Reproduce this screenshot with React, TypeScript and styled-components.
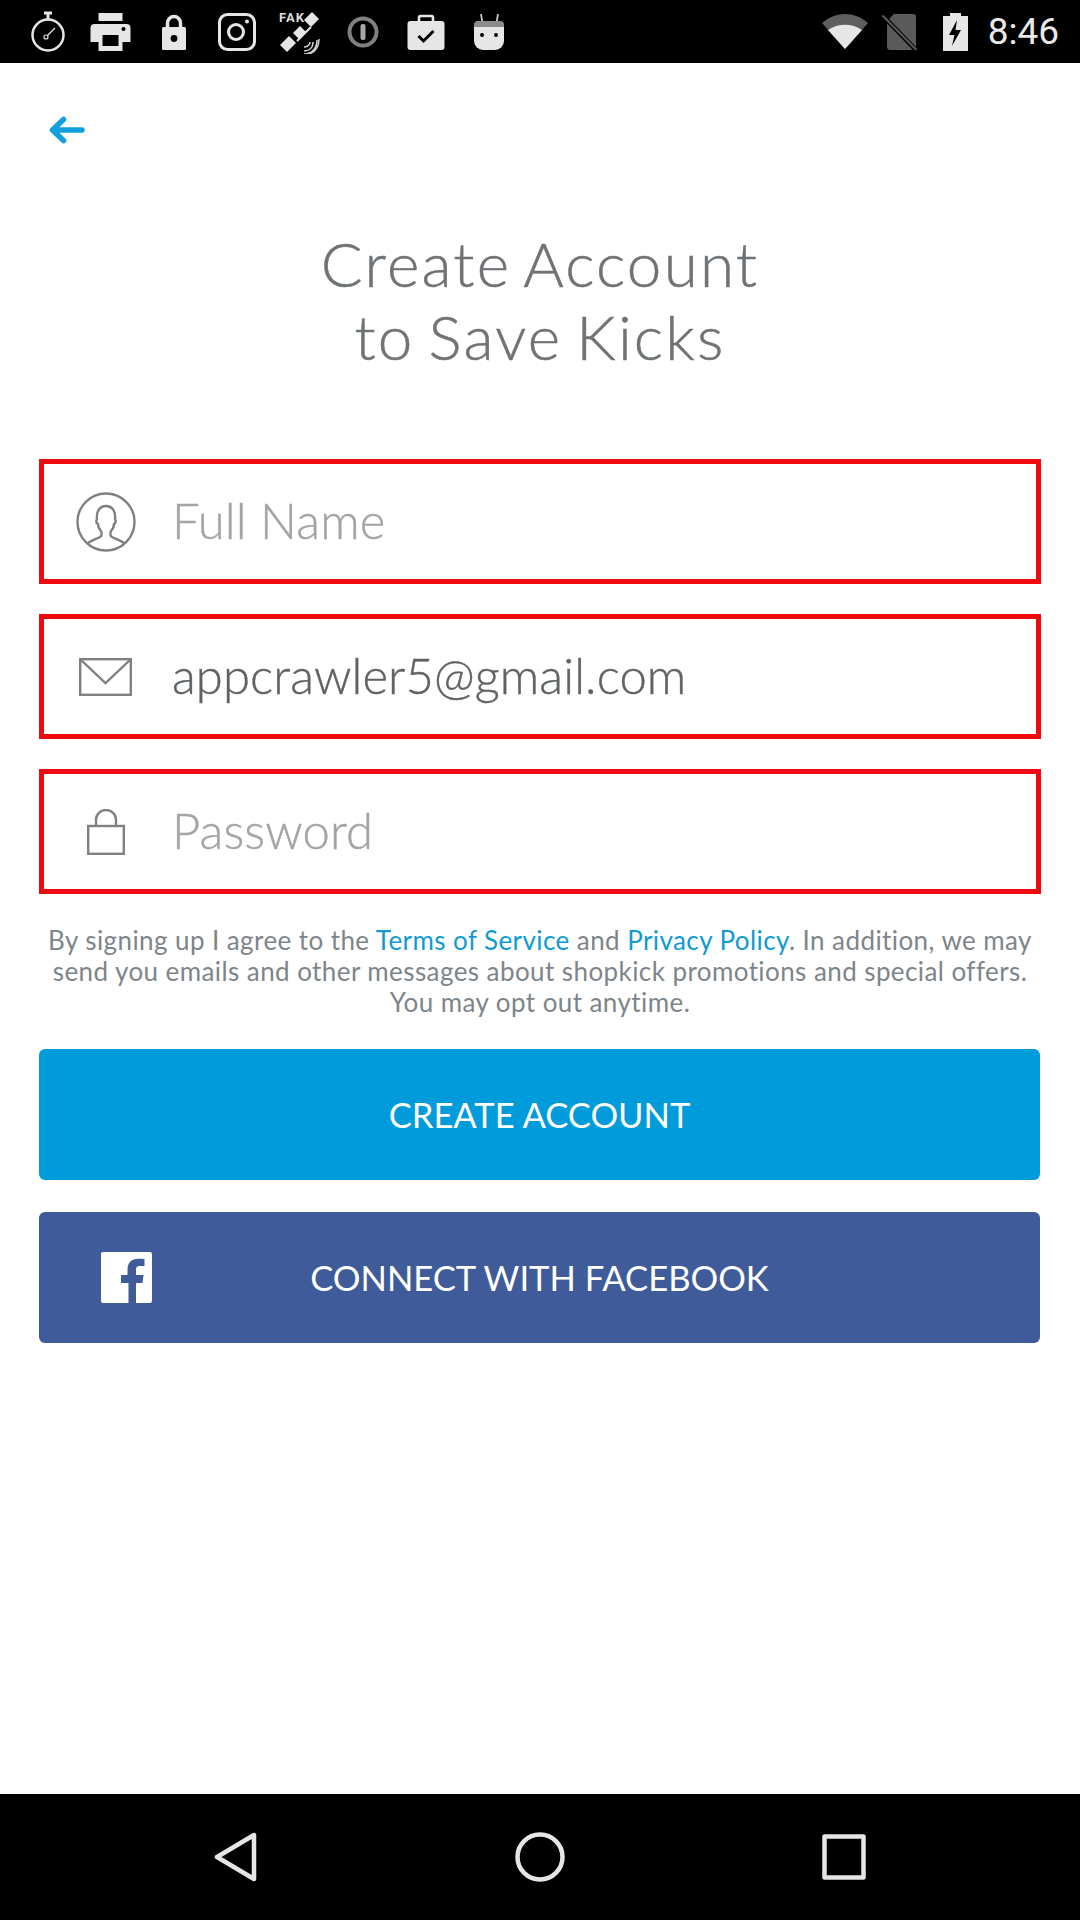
import React from 'react';
import styled, { createGlobalStyle } from 'styled-components';

const Global = createGlobalStyle`
  html, body { margin: 0; padding: 0; background: #fff; }
  * { box-sizing: border-box; }
`;

const Screen = styled.div`
  width: 1080px;
  height: 1920px;
  display: flex;
  flex-direction: column;
  font-family: Lato, "Liberation Sans", sans-serif;
  overflow: hidden;
`;

const StatusBar = styled.div`
  height: 63px;
  flex: none;
  background: #000;
  display: flex;
  align-items: center;
  justify-content: space-between;
  padding: 0 21px 0 16px;
`;

const StatusGroup = styled.div`
  display: flex;
  align-items: center;
`;

const NotifSlot = styled.div`
  width: 63px;
  height: 63px;
  display: flex;
  align-items: center;
  justify-content: center;
`;

const SystemSlot = styled.div`
  width: 55px;
  height: 63px;
  display: flex;
  align-items: center;
  justify-content: center;
`;

const Clock = styled.div`
  font-family: Roboto, sans-serif;
  font-size: 37px;
  color: #e8e8e8;
  margin-left: 5px;
`;

const Main = styled.div`
  flex: 1;
  background: #fff;
  padding: 0 39px;
`;

const BackButton = styled.button`
  display: block;
  border: 0;
  background: none;
  padding: 0;
  margin: 53px 0 0 10px;
  height: 28px;
  line-height: 0;
`;

const Title = styled.h1`
  margin: 83px 0 0;
  font-weight: 300;
  font-size: 62px;
  line-height: 73px;
  text-align: center;
  color: #6f7376;
  letter-spacing: 2.2px;
  word-spacing: -5px;
  -webkit-text-stroke: 0.5px #6f7376;
`;

const Fields = styled.div`
  margin-top: 86px;
  display: flex;
  flex-direction: column;
  gap: 30px;
`;

const Field = styled.label`
  height: 125px;
  border: 5px solid #ef0a10;
  display: flex;
  align-items: center;
`;

const FieldIcon = styled.div`
  width: 123px;
  flex: none;
  display: flex;
  justify-content: center;
`;

const FieldInput = styled.input`
  flex: 1;
  min-width: 0;
  height: 100%;
  border: 0;
  outline: 0;
  padding: 0 0 4px 5px;
  background: none;
  font-family: inherit;
  font-weight: 300;
  font-size: 49px;
  letter-spacing: 0.1px;
  -webkit-text-stroke: 0.4px currentColor;
  color: #5f6366;
  &::placeholder {
    color: #a2a4a6;
    opacity: 1;
  }
`;

const Legal = styled.p`
  margin: 31px -6px 0;
  text-align: center;
  font-size: 26px;
  line-height: 31px;
  letter-spacing: 0.42px;
  color: #7d858a;
`;

const LegalLink = styled.a`
  color: #0f9ad4;
`;

const Actions = styled.div`
  margin-top: 31px;
  padding-right: 1px;
  display: flex;
  flex-direction: column;
  gap: 32px;
`;

const ActionButton = styled.button<{ $bg: string }>`
  height: 131px;
  width: 100%;
  border: 0;
  border-radius: 6px;
  background: ${(p) => p.$bg};
  color: #fff;
  font-family: inherit;
  font-size: 34.6px;
  padding: 0;
  display: grid;
  grid-template-columns: 1fr auto 1fr;
  align-items: center;
`;

const ButtonIcon = styled.span`
  display: flex;
  padding-left: 62px;
`;

const NavBar = styled.div`
  height: 126px;
  flex: none;
  background: #000;
  display: grid;
  grid-template-columns: repeat(3, 304px);
  justify-content: center;
  align-items: center;
  justify-items: center;
`;

const TimerIcon = () => (
  <svg width="36" height="42" viewBox="0 0 36 42" fill="none" stroke="#e6e6e6">
    <circle cx="18" cy="24" r="15.5" strokeWidth="2.5" />
    <path d="M14 2h8M18 2v6" strokeWidth="3" />
    <circle cx="16" cy="26" r="2" strokeWidth="1.2" />
    <path d="M17.5 24.5L25 17" strokeWidth="1.2" />
  </svg>
);

const PrinterIcon = () => (
  <svg width="41" height="38" viewBox="0 0 40 38" fill="#e6e6e6">
    <path d="M8 0h24v8H8z" />
    <path fillRule="evenodd" d="M4 11h32a4 4 0 0 1 4 4v14h-8v9H8v-9H0V15a4 4 0 0 1 4-4zM12 22v11h16V22zM33 14a2 2 0 1 0 0 4a2 2 0 0 0 0-4z" />
  </svg>
);

const LockIcon = () => (
  <svg width="26" height="36" viewBox="0 0 25 36" fill="none">
    <path d="M6 14V9a6.5 6.5 0 0 1 13 0v5" stroke="#e6e6e6" strokeWidth="3.5" />
    <rect x="0.5" y="13" width="24" height="23" rx="1.5" fill="#e6e6e6" />
    <circle cx="12.5" cy="24.5" r="3.4" fill="#000" />
  </svg>
);

const InstagramIcon = () => (
  <svg width="38" height="38" viewBox="0 0 38 38" fill="none" stroke="#e6e6e6" strokeWidth="3">
    <rect x="1.5" y="1.5" width="35" height="35" rx="8" />
    <circle cx="18" cy="19" r="7.5" />
    <circle cx="29" cy="8.5" r="2" fill="#e6e6e6" stroke="none" />
  </svg>
);

const SatelliteIcon = () => (
  <svg width="44" height="45" viewBox="0 0 44 45" fill="none">
    <text x="1" y="13" fontFamily="Roboto, sans-serif" fontWeight="700" fontSize="13" fill="#dcdcdc" letterSpacing="1">FAK</text>
    <path d="M26 11l8-8 7 7-8 8z" fill="#e6e6e6" />
    <path d="M15 24l7-7 6 6-7 7z" fill="#e6e6e6" />
    <path d="M2 36l9-9 7 7-9 9z" fill="#e6e6e6" />
    <path d="M26 25l-7 7M33 18l-8 8" stroke="#e6e6e6" strokeWidth="2" />
    <path d="M26 42c5 0 9-3 9-9M26 38c3 0 6-2 6-5M26 45c8 0 13-6 13-14M41 30c0 8-4 13-10 15" stroke="#cfcfcf" strokeWidth="1.5" />
  </svg>
);

const DndIcon = () => (
  <svg width="32" height="32" viewBox="0 0 32 32" fill="none">
    <circle cx="16" cy="16" r="13.5" stroke="#808080" strokeWidth="4" />
    <rect x="13.5" y="8" width="5" height="16" rx="2" fill="#a8a8a8" />
  </svg>
);

const BriefcaseIcon = () => (
  <svg width="38" height="36" viewBox="0 0 38 36" fill="none">
    <path d="M12 8V3.5A1.5 1.5 0 0 1 13.5 2h11A1.5 1.5 0 0 1 26 3.5V8" stroke="#e6e6e6" strokeWidth="2.6" />
    <rect x="0.5" y="7" width="37" height="29" rx="3" fill="#e6e6e6" />
    <path d="M11.5 22l5 5 10-10" stroke="#000" strokeWidth="3" />
  </svg>
);

const AndroidIcon = () => (
  <svg width="30" height="36" viewBox="0 0 30 36" fill="none">
    <path d="M7 0l1.500 9M24 0l-1.500 9" stroke="#c8c8c8" strokeWidth="1.8" />
    <path d="M0 11a4 4 0 0 1 4-4h22a4 4 0 0 1 4 4v3H0z" fill="#8c8c8c" />
    <path d="M0 13h30v14a9 9 0 0 1-9 9H9a9 9 0 0 1-9-9z" fill="#e6e6e6" />
    <circle cx="8" cy="21" r="2" fill="#000" />
    <circle cx="22" cy="21" r="2" fill="#000" />
  </svg>
);

const WifiIcon = () => (
  <svg width="46" height="37" viewBox="0 0 46 37">
    <path d="M23 36L0 10C14-2 32-2 46 10z" fill="#5e5e5e" />
    <path d="M23 36L6 17c10-7 24-7 34 0z" fill="#e6e6e6" />
  </svg>
);

const NoSimIcon = () => (
  <svg width="36" height="38" viewBox="0 0 36 38" fill="none">
    <path d="M12 1h19a3 3 0 0 1 3 3v30a3 3 0 0 1-3 3H8a3 3 0 0 1-3-3V8z" fill="#5a5a5a" />
    <path d="M1 3l33 34" stroke="#000" strokeWidth="4.5" />
    <path d="M0.5 2.500l34 34.500" stroke="#5a5a5a" strokeWidth="2" />
  </svg>
);

const BatteryIcon = () => (
  <svg width="25" height="38" viewBox="0 0 25 38">
    <path d="M7 0h11v3h7v35H0V3h7z" fill="#e6e6e6" />
    <path d="M14 7L6 22h5.500L9 33l9-16h-5.500z" fill="#000" />
  </svg>
);

const PersonIcon = () => (
  <svg width="60" height="60" viewBox="0 0 60 60" fill="none" stroke="#808080" strokeWidth="2.4">
    <circle cx="30" cy="30" r="28.500" />
    <path d="M11 52c3-3 9-5 13-7c2-1 2-4 1-6c-2-2-3-4-3-7c-2-1-2-3-1-5c-1-8 3-13 9-13s10 5 9 13c1 2 1 4-1 5c0 3-1 5-3 7c-1 2-1 5 1 6c4 2 10 4 13 7" />
  </svg>
);

const MailIcon = () => (
  <svg width="53" height="38" viewBox="0 0 53 38" fill="none" stroke="#808080" strokeWidth="2.4">
    <rect x="1.200" y="1.200" width="50.600" height="35.600" />
    <path d="M2 2l24.500 23L51 2" />
  </svg>
);

const PadlockIcon = () => (
  <svg width="38" height="46" viewBox="0 0 38 46" fill="none" stroke="#808080" strokeWidth="2.4">
    <rect x="1.200" y="17" width="35.600" height="27.800" />
    <path d="M9 17V10.500a10 9.500 0 0 1 20 0V17" />
  </svg>
);

const FacebookIcon = () => (
  <svg width="51" height="51" viewBox="0 0 51 51">
    <path fill="#fff" d="M2 0h47a2 2 0 0 1 2 2v47a2 2 0 0 1-2 2H35V31h6.500l1-8H35v-5c0-2.300.7-3.900 4-3.900h4.500V7c-.8-.1-3.400-.3-6.400-.3-6.300 0-10.600 3.800-10.600 10.900V23H20v8h7.500v20H2a2 2 0 0 1-2-2V2a2 2 0 0 1 2-2z" />
  </svg>
);

const notifications = [
  <TimerIcon />,
  <PrinterIcon />,
  <LockIcon />,
  <InstagramIcon />,
  <SatelliteIcon />,
  <DndIcon />,
  <BriefcaseIcon />,
  <AndroidIcon />,
];

const App: React.FC = () => {
  return (
    <Screen>
      <Global />
      <StatusBar>
        <StatusGroup>
          {notifications.map((icon, idx) => (
            <NotifSlot key={idx}>{icon}</NotifSlot>
          ))}
        </StatusGroup>
        <StatusGroup>
          <SystemSlot><WifiIcon /></SystemSlot>
          <SystemSlot><NoSimIcon /></SystemSlot>
          <SystemSlot><BatteryIcon /></SystemSlot>
          <Clock>8:46</Clock>
        </StatusGroup>
      </StatusBar>
      <Main>
        <BackButton>
          <svg width="36" height="28" viewBox="0 0 36 28" fill="none" stroke="#129fdd" strokeWidth="5.5" strokeLinecap="round" strokeLinejoin="round">
            <path d="M33 14H4M14.500 3.500L3.500 14l11 10.500" />
          </svg>
        </BackButton>
        <Title>
          Create Account
          <br />
          to Save Kicks
        </Title>
        <Fields>
          <Field>
            <FieldIcon><PersonIcon /></FieldIcon>
            <FieldInput placeholder="Full Name" readOnly />
          </Field>
          <Field>
            <FieldIcon><MailIcon /></FieldIcon>
            <FieldInput value="appcrawler5@gmail.com" readOnly />
          </Field>
          <Field>
            <FieldIcon><PadlockIcon /></FieldIcon>
            <FieldInput placeholder="Password" readOnly />
          </Field>
        </Fields>
        <Legal>
          By signing up I agree to the <LegalLink>Terms of Service</LegalLink> and{' '}
          <LegalLink>Privacy Policy</LegalLink>. In addition, we may
          <br />
          send you emails and other messages about shopkick promotions and special offers.
          <br />
          You may opt out anytime.
        </Legal>
        <Actions>
          <ActionButton $bg="#009bdb">
            <span />
            <span>CREATE ACCOUNT</span>
            <span />
          </ActionButton>
          <ActionButton $bg="#3f5b99">
            <ButtonIcon><FacebookIcon /></ButtonIcon>
            <span>CONNECT WITH FACEBOOK</span>
            <span />
          </ActionButton>
        </Actions>
      </Main>
      <NavBar>
        <svg width="44" height="50" viewBox="0 0 44 50" fill="none" stroke="#e6e6e6" strokeWidth="4.500" strokeLinejoin="round">
          <path d="M40 3v44L3 25z" />
        </svg>
        <svg width="50" height="50" viewBox="0 0 50 50" fill="none" stroke="#e6e6e6" strokeWidth="4.500">
          <circle cx="25" cy="25" r="22.500" />
        </svg>
        <svg width="44" height="46" viewBox="0 0 44 46" fill="none" stroke="#e6e6e6" strokeWidth="4.500" strokeLinejoin="round">
          <rect x="2.500" y="2.500" width="39" height="41" />
        </svg>
      </NavBar>
    </Screen>
  );
};

export default App;
